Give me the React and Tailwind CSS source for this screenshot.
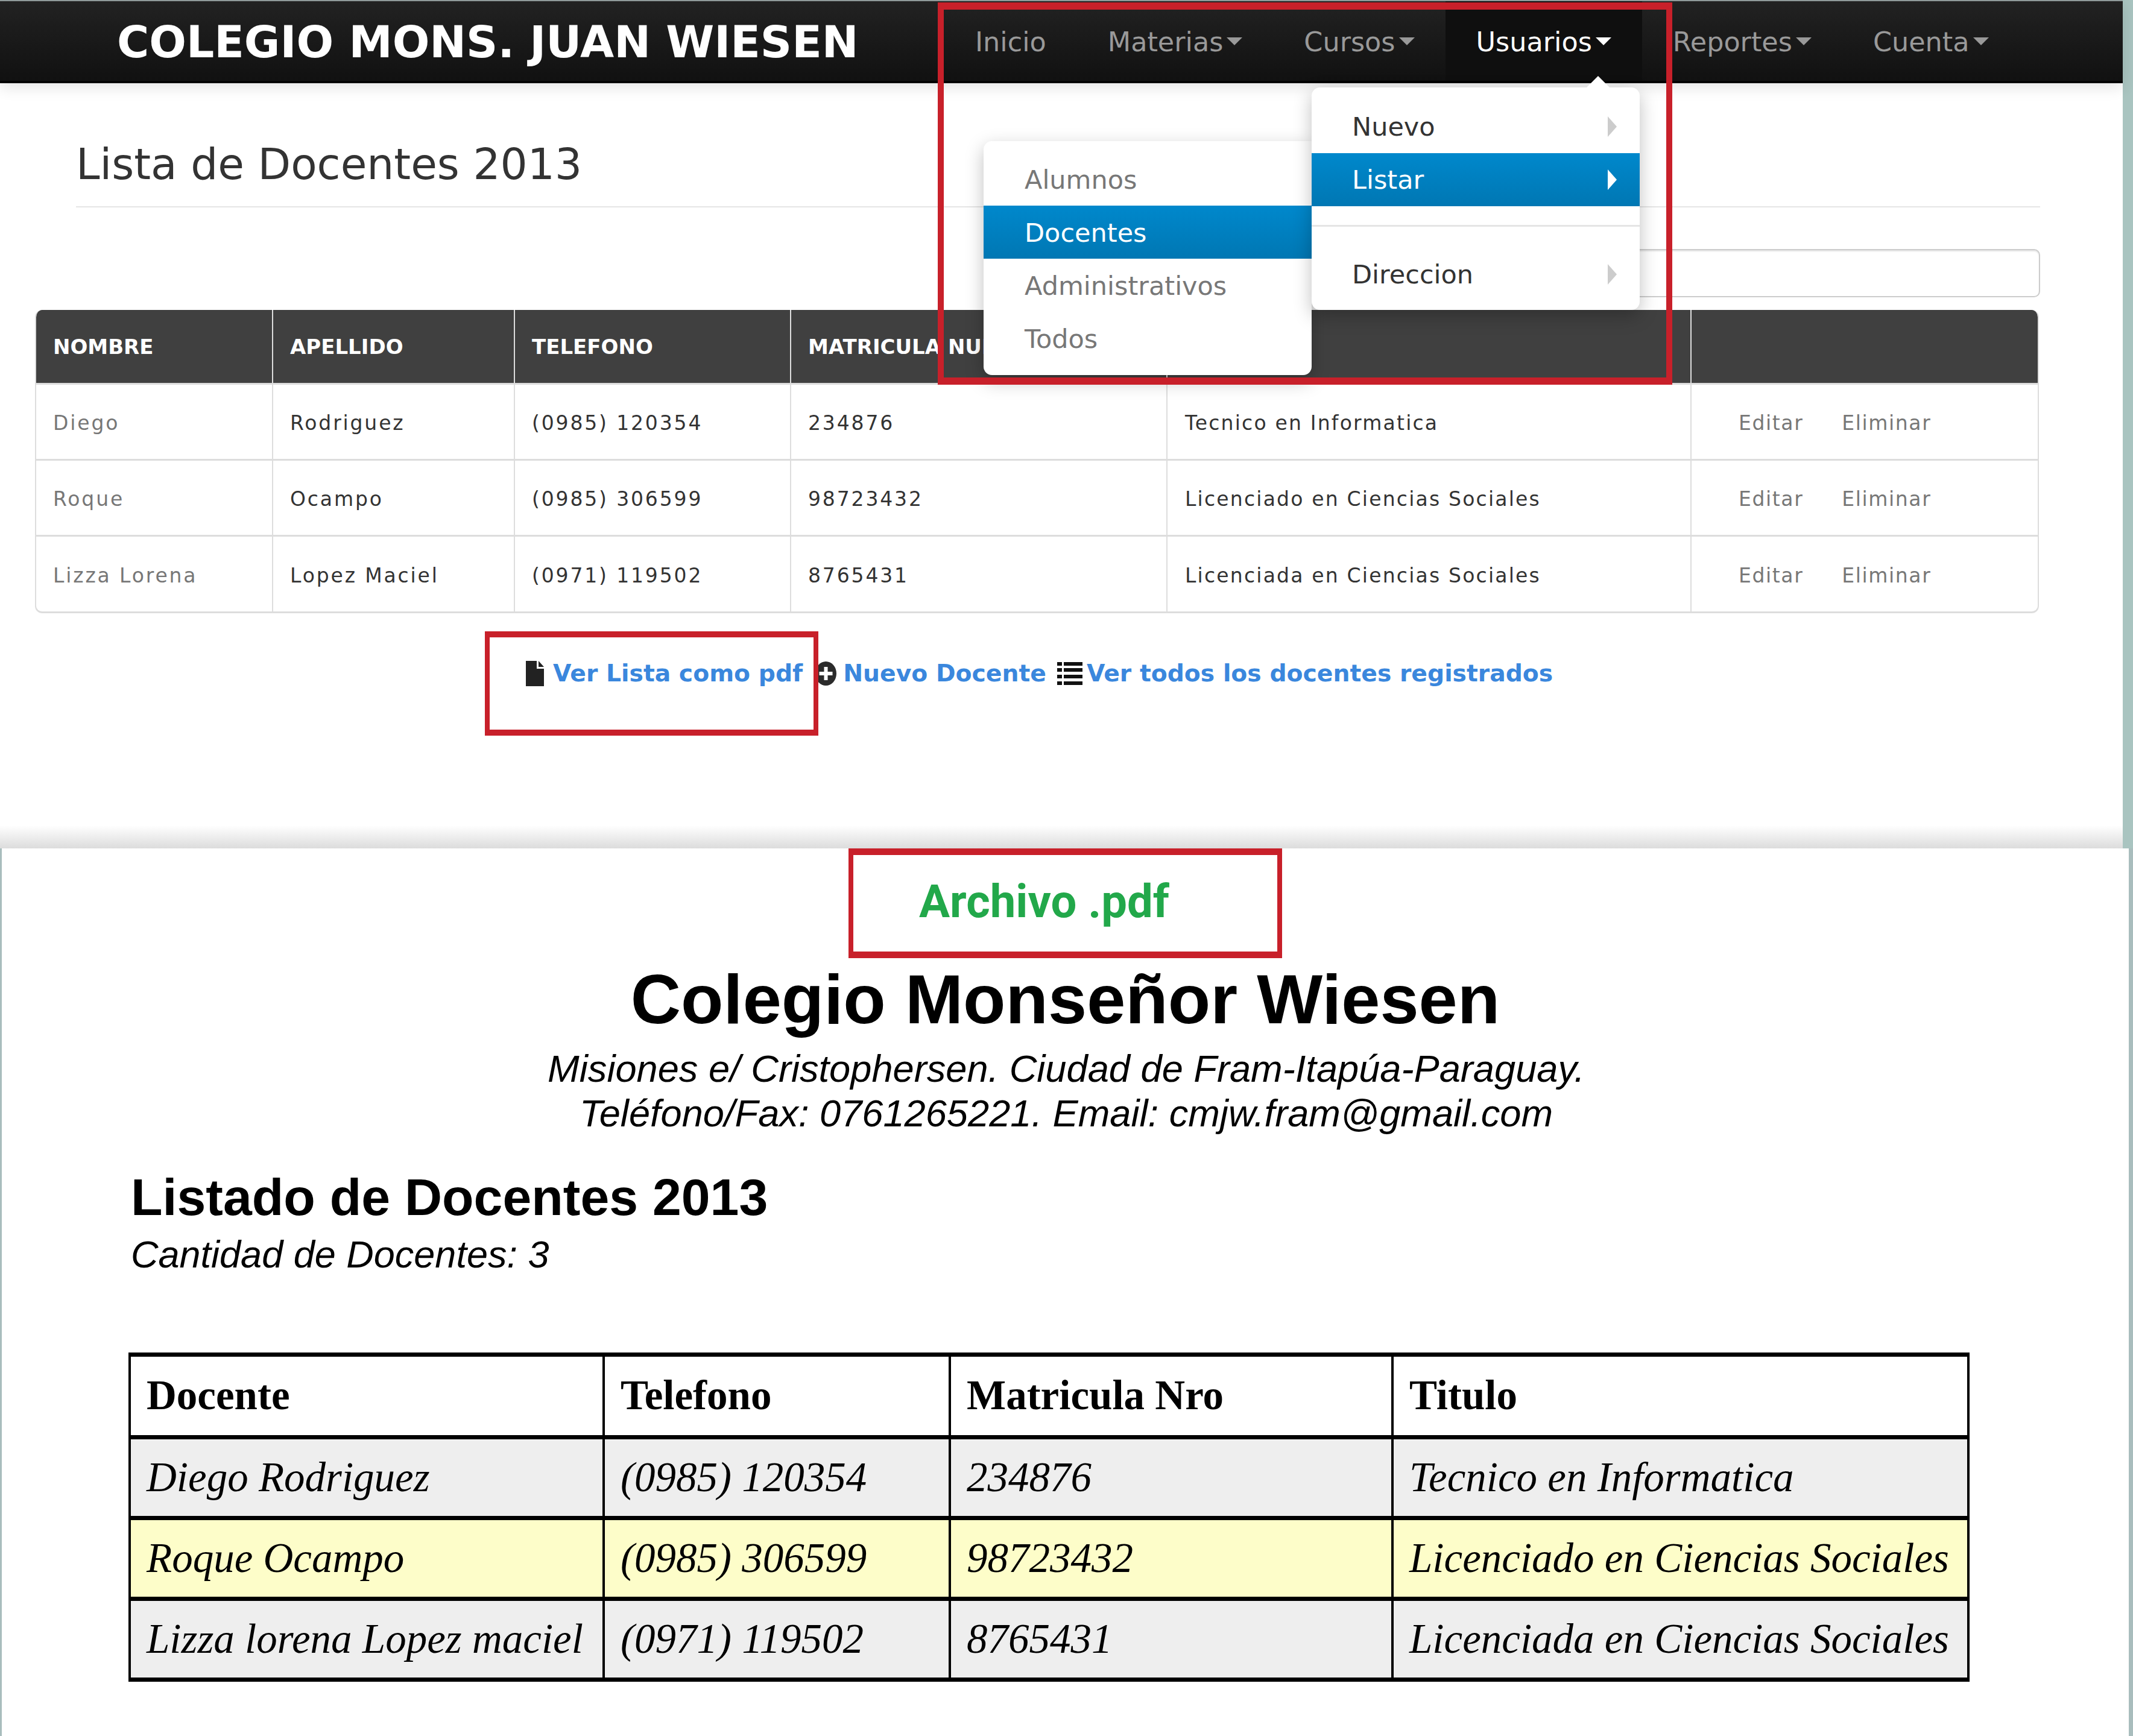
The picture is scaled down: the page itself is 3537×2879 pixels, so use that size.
const docentes = [
  ["Diego", "Rodriguez", "(0985) 120354", "234876", "Tecnico en Informatica"],
  ["Roque", "Ocampo", "(0985) 306599", "98723432", "Licenciado en Ciencias Sociales"],
  ["Lizza Lorena", "Lopez Maciel", "(0971) 119502", "8765431", "Licenciada en Ciencias Sociales"],
];

const pdfRows = [
  ["Diego Rodriguez", "(0985) 120354", "234876", "Tecnico en Informatica", "bg-[#eeeeee]"],
  ["Roque Ocampo", "(0985) 306599", "98723432", "Licenciado en Ciencias Sociales", "bg-[#fdfdc9]"],
  ["Lizza lorena Lopez maciel", "(0971) 119502", "8765431", "Licenciada en Ciencias Sociales", "bg-[#eeeeee]"],
];

function Caret({ color = "border-t-[#999999]" }) {
  return <span className={`ml-[6px] mt-[-4px] h-0 w-0 border-x-[13px] border-t-[13px] border-x-transparent ${color}`} />;
}

function NavItem({ label, caret = true, active = false }) {
  return (
    <div className={`flex h-full items-center px-[51px] pt-[4px] ${active ? "bg-[#0f0f0f] text-white" : "text-[#999999]"}`}>
      <span>{label}</span>
      {caret && <Caret color={active ? "border-t-white" : "border-t-[#999999]"} />}
    </div>
  );
}

function MenuItem({ label, active = false, muted = false, arrow = false, pl = "pl-[65px]" }) {
  const tone = active
    ? "bg-linear-to-b from-[#0088cc] to-[#0077b3] text-white"
    : muted
      ? "text-[#777777]"
      : "text-[#333333]";
  return (
    <div className={`flex h-[88px] items-center justify-between pr-[38px] ${pl} ${tone}`}>
      <span>{label}</span>
      {arrow && (
        <span className={`h-0 w-0 border-y-[17px] border-l-[15px] border-y-transparent ${active ? "border-l-white" : "border-l-[#cccccc]"}`} />
      )}
    </div>
  );
}

function FileIcon() {
  return (
    <svg width="30" height="42" viewBox="0 0 30 42" className="shrink-0">
      <path d="M0 0h18v13h12v29H0z M21 0l9 10h-9z" fill="#222222" />
    </svg>
  );
}

function PlusIcon() {
  return (
    <svg width="35" height="40" viewBox="0 0 35 40" className="shrink-0">
      <ellipse cx="17.5" cy="20" rx="17.5" ry="20" fill="#2b2b2b" />
      <path d="M14.5 9h6v8h8v6h-8v8h-6v-8h-8v-6h8z" fill="#ffffff" />
    </svg>
  );
}

function ListIcon() {
  return (
    <svg width="42" height="38" viewBox="0 0 42 38" className="shrink-0">
      <path d="M0 0h8v6H0zM11 0h31v6H11zM0 10h8v6H0zM11 10h31v6H11zM0 21h8v6H0zM11 21h31v6H11zM0 32h8v6H0zM11 32h31v6H11z" fill="#111111" />
    </svg>
  );
}

function DocentesPage() {
  return (
    <section className="relative flex h-[1407px] w-[3537px] flex-col border-r-[17px] border-[#a9c4c0] bg-white font-['DejaVu_Sans',sans-serif]">
      <header className="relative z-10 flex h-[138px] items-center border-t-2 border-b-4 border-t-[#8f9a9a] border-b-black bg-linear-to-b from-[#222222] to-[#111111] shadow-[0_6px_24px_rgba(0,0,0,0.12)]">
        <div className="w-[1566px] pt-[5px] pl-[194px] text-[72.6px] leading-none font-bold text-white">COLEGIO MONS. JUAN WIESEN</div>
        <nav className="flex h-full text-[44.5px]">
          <NavItem label="Inicio" caret={false} />
          <NavItem label="Materias" />
          <NavItem label="Cursos" />
          <NavItem label="Usuarios" active />
          <NavItem label="Reportes" />
          <NavItem label="Cuenta" />
        </nav>
      </header>

      <div className="ml-[126px] w-[3257px] border-b-2 border-[#e5e5e5] pt-[95px] pb-[29px] text-[71px] leading-[80px] text-[#333333]">
        Lista de Docentes 2013
      </div>

      <div className="mt-[69px] ml-[2500px] h-[80px] w-[883px] rounded-[10px] border-2 border-[#cccccc] shadow-[inset_0_2px_2px_rgba(0,0,0,0.1)]" />

      <div className="mt-[21px] ml-[58px] w-[3323px] overflow-hidden rounded-[12px] border-x-2 border-b-[3px] border-[#dddddd]">
        <table className="w-full table-fixed border-collapse text-[33px] tracking-[2.85px] text-[#333333]">
          <colgroup>
            <col className="w-[392px]" />
            <col className="w-[401px]" />
            <col className="w-[458px]" />
            <col className="w-[624px]" />
            <col className="w-[869px]" />
            <col />
          </colgroup>
          <thead>
            <tr className="h-[122px] bg-[#404040] text-left text-[34px] tracking-normal text-white">
              {["NOMBRE", "APELLIDO", "TELEFONO", "MATRICULA NUMERO", "TITULO", ""].map((h) => (
                <th key={h} className="border-l-2 border-[#dddddd] pt-[3px] pl-[28px] font-bold whitespace-nowrap first:border-l-0">{h}</th>
              ))}
            </tr>
          </thead>
          <tbody>
            {docentes.map((d) => (
              <tr key={d[0]} className="h-[126px] border-t-[3px] border-[#dddddd]">
                <td className="pt-[5px] pl-[28px] text-[#777777]">{d[0]}</td>
                <td className="border-l-2 border-[#dddddd] pt-[5px] pl-[28px]">{d[1]}</td>
                <td className="border-l-2 border-[#dddddd] pt-[5px] pl-[28px]">{d[2]}</td>
                <td className="border-l-2 border-[#dddddd] pt-[5px] pl-[28px]">{d[3]}</td>
                <td className="border-l-2 border-[#dddddd] pt-[5px] pl-[29px] tracking-[2.2px]">{d[4]}</td>
                <td className="border-l-2 border-[#dddddd] pt-[5px] pl-[78px] tracking-[1.6px] text-[#777777]">
                  <span>Editar</span>
                  <span className="ml-[64px]">Eliminar</span>
                </td>
              </tr>
            ))}
          </tbody>
        </table>
      </div>

      <div className="mt-[78px] ml-[872px] flex items-center text-[39.3px] leading-[44px] font-bold text-[#3a87dd]">
        <FileIcon />
        <span className="ml-[15px]">Ver Lista como pdf</span>
        <span className="ml-[21px]"><PlusIcon /></span>
        <span className="ml-[11px]">Nuevo Docente</span>
        <span className="ml-[18px]"><ListIcon /></span>
        <span className="ml-[7px]">Ver todos los docentes registrados</span>
      </div>

      <div className="mt-auto h-[38px] bg-linear-to-b from-white to-[#dcdcdc]" />

      {/* red marks and the open menus lie over the page */}
      <div className="absolute top-[4px] left-[1555px] z-20 h-[634px] w-[1218px] border-x-[10px] border-y-[12px] border-[#c8202a]" />
      <div className="absolute top-[1047px] left-[804px] z-20 h-[173px] w-[553px] border-x-[8px] border-y-[10px] border-[#c8202a]" />

      <div className="absolute top-[234px] left-[1631px] z-10 h-[388px] w-[544px] rounded-l-[14px] rounded-br-[14px] bg-white pt-[19px] text-[43px] shadow-[0_10px_30px_rgba(0,0,0,0.25)]">
        <MenuItem label="Alumnos" muted pl="pl-[68px] pt-[3px]" />
        <MenuItem label="Docentes" active pl="pl-[68px] pt-[3px]" />
        <MenuItem label="Administrativos" muted pl="pl-[68px] pt-[3px]" />
        <MenuItem label="Todos" muted pl="pl-[68px] pt-[3px]" />
      </div>

      <div className="absolute top-[145px] left-[2175px] z-10 h-[369px] w-[544px] rounded-[14px] bg-white pt-[21px] text-[43px] shadow-[0_10px_30px_rgba(0,0,0,0.25)]">
        <span className="absolute -top-[19px] left-[455px] h-0 w-0 border-x-[20px] border-b-[20px] border-x-transparent border-b-white" />
        <MenuItem label="Nuevo" arrow pl="pl-[67px]" />
        <MenuItem label="Listar" active arrow pl="pl-[67px]" />
        <div className="mt-[31px] mb-[35px] h-[3px] bg-[#e5e5e5]" />
        <MenuItem label="Direccion" arrow pl="pl-[67px]" />
      </div>
    </section>
  );
}

function PdfPage() {
  return (
    <section className="flex h-[1472px] w-[3537px] flex-col border-r-[7px] border-l-[3px] border-[#a9bdbd] bg-white font-['Liberation_Sans',sans-serif] text-black">
      <div className="flex flex-col items-center">
        <div className="flex h-[182px] w-[719px] items-center justify-center border-x-[8px] border-y-[11px] border-[#c8202a] pr-[70px] pb-[6px] font-['Roboto',sans-serif] text-[76px] font-bold text-[#22a84a]">
          Archivo .pdf
        </div>
        <h1 className="mt-[8px] text-[115.4px] leading-[120px] font-bold">Colegio Monseñor Wiesen</h1>
        <p className="mt-[18px] pl-[3px] text-center text-[63.2px] leading-[74px] italic">
          Misiones e/ Cristophersen. Ciudad de Fram-Itapúa-Paraguay.<br />
          Teléfono/Fax: 0761265221. Email: cmjw.fram@gmail.com
        </p>
      </div>

      <div className="mt-[52px] pl-[214px]">
        <h2 className="text-[86px] leading-[100px] font-bold">Listado de Docentes 2013</h2>
        <p className="mt-[8px] text-[63px] leading-[74px] italic">Cantidad de Docentes: 3</p>
      </div>

      <table className="mt-[126px] ml-[210px] w-[3053px] table-fixed border-collapse font-['Liberation_Serif',serif] text-[69px]">
        <colgroup>
          <col className="w-[786px]" />
          <col className="w-[574px]" />
          <col className="w-[734px]" />
          <col />
        </colgroup>
        <thead>
          <tr className="h-[137px] text-left">
            {["Docente", "Telefono", "Matricula Nro", "Titulo"].map((h) => (
              <th key={h} className="border-x-[4px] border-y-[7px] border-black pl-[26px] text-[69px] font-bold">{h}</th>
            ))}
          </tr>
        </thead>
        <tbody>
          {pdfRows.map((r) => (
            <tr key={r[0]} className={`h-[134px] italic ${r[4]}`}>
              {r.slice(0, 4).map((c) => (
                <td key={c} className="border-x-[4px] border-y-[7px] border-black pl-[26px] whitespace-nowrap">{c}</td>
              ))}
            </tr>
          ))}
        </tbody>
      </table>
    </section>
  );
}

export default function App() {
  return (
    <div className="h-[2879px] w-[3537px] overflow-hidden bg-white">
      <DocentesPage />
      <PdfPage />
    </div>
  );
}
